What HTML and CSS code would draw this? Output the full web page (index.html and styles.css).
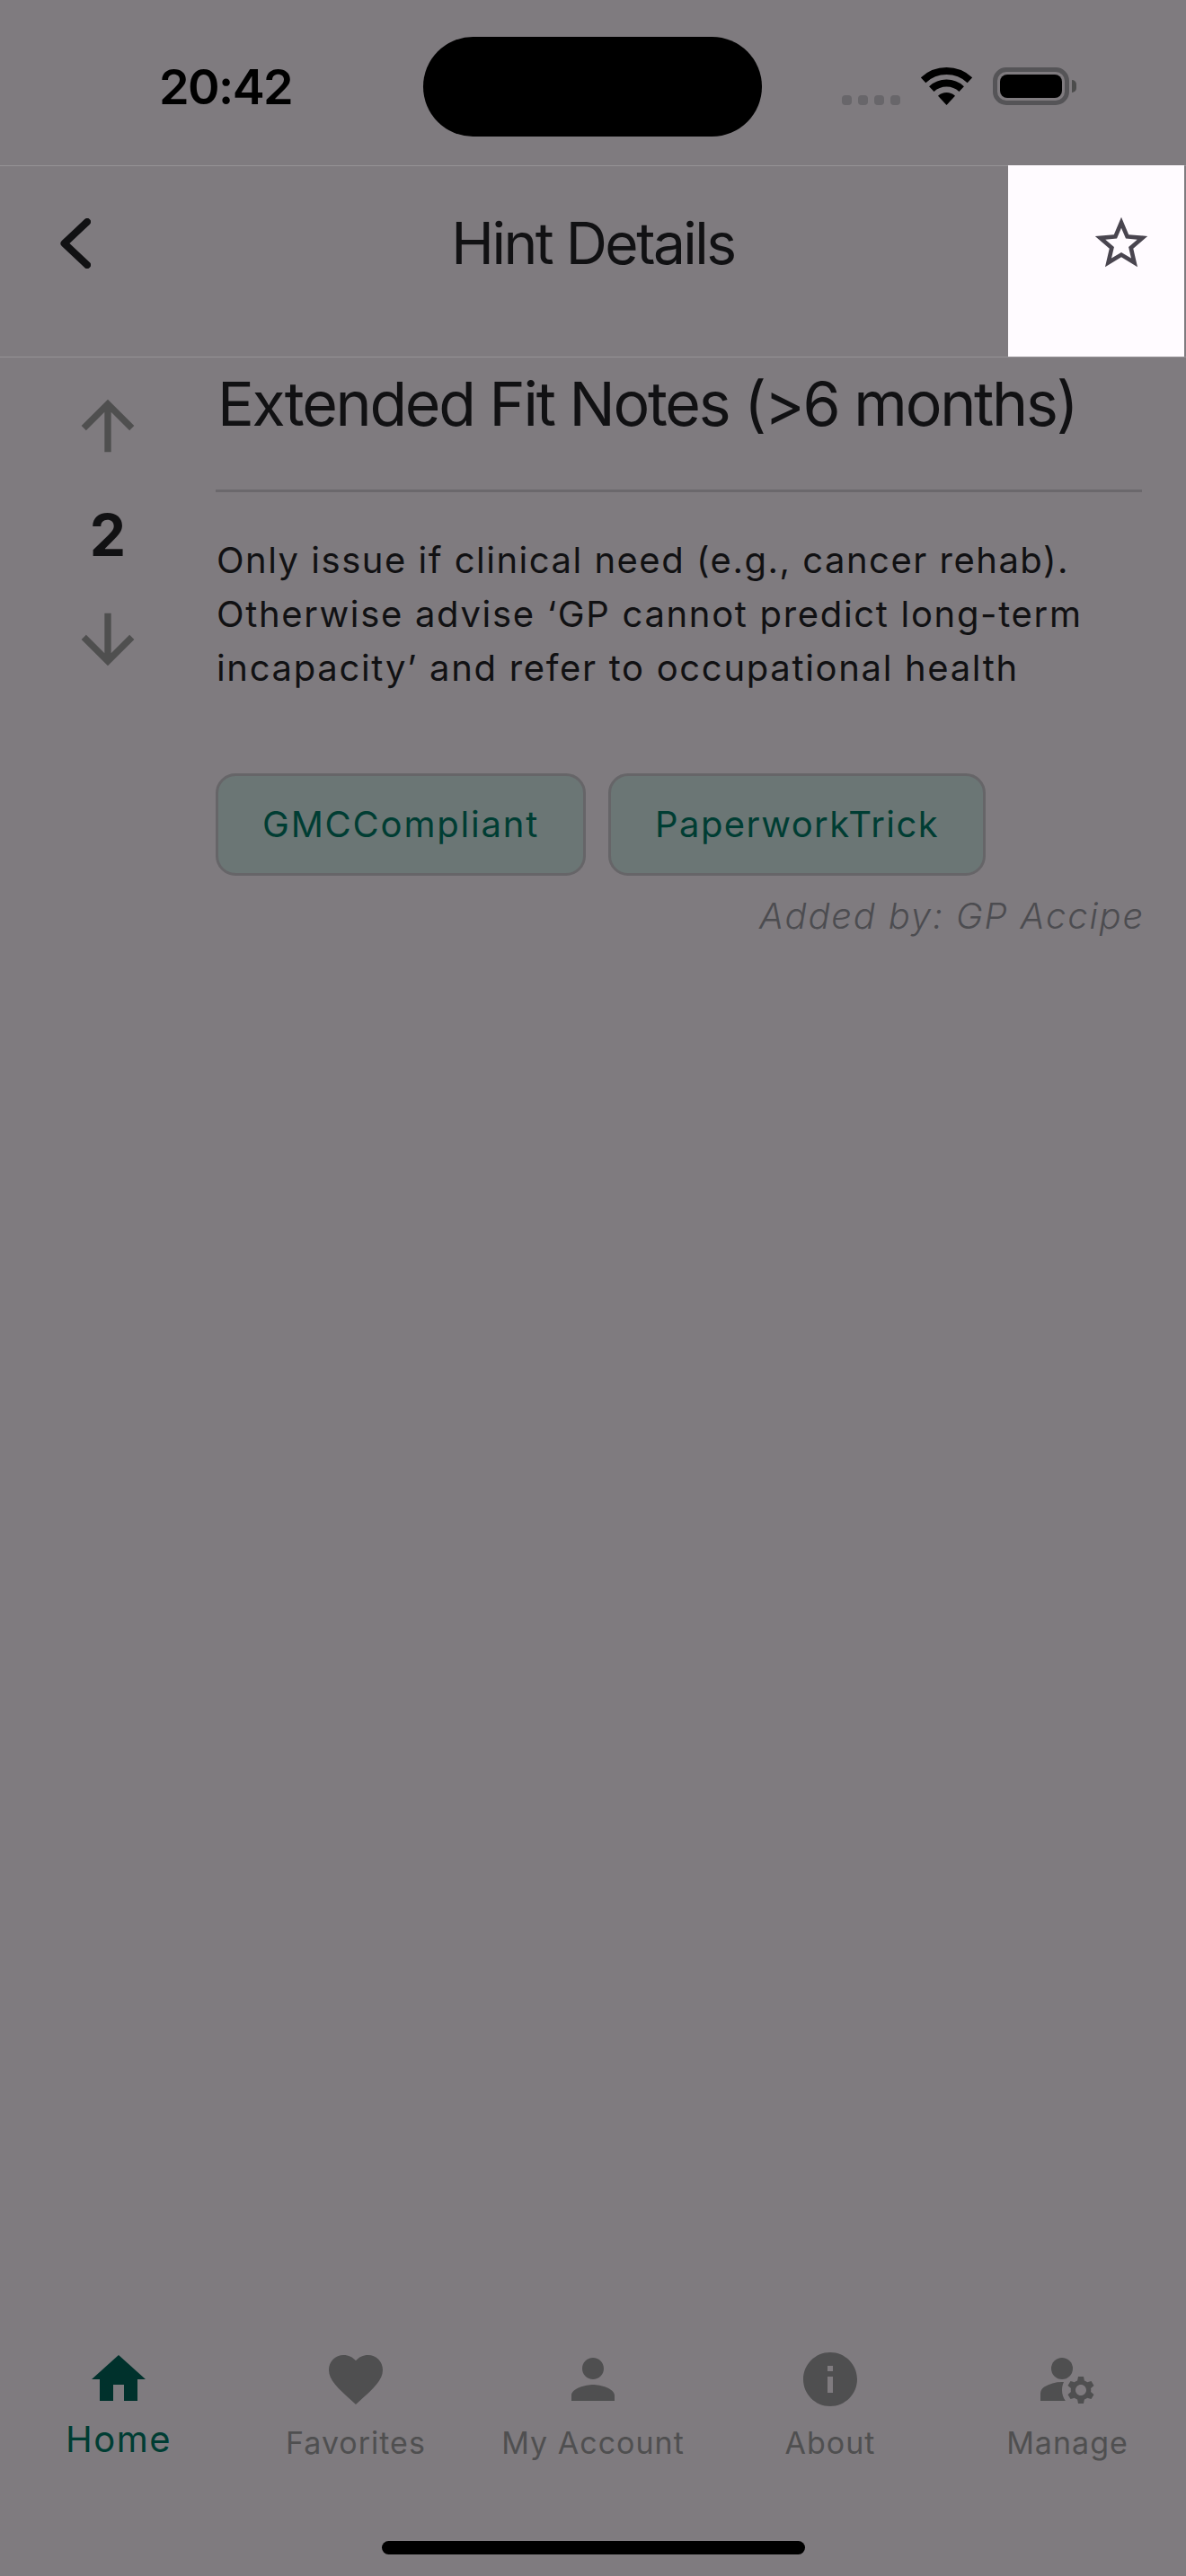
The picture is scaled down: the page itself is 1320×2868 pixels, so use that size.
FILE: index.html
```html
<!DOCTYPE html>
<html lang="en">
<head>
    <meta charset="UTF-8">
    <meta name="viewport" content="width=device-width, initial-scale=1.0">
    <title>Hint Details</title>
    <link rel="stylesheet" href="styles.css">
</head>
<body>
    <div id="screen">
        <div class="status-bar">
            <div class="status-time">20:42</div>
            <div class="island"></div>
            <div class="status-icons">
                <div class="signal"><span></span><span></span><span></span><span></span></div>
                <svg class="wifi" width="57" height="42" viewBox="0 0 57 42">
                    <path d="M2.6 14.2A38 38 0 0 1 54.4 14.2" fill="none" stroke="#000" stroke-width="8"/>
                    <path d="M11.8 24.1A24.5 24.5 0 0 1 45.2 24.1" fill="none" stroke="#000" stroke-width="8"/>
                    <path d="M28.5 42L19 31.8A14 14 0 0 1 38 31.8Z" fill="#000"/>
                </svg>
                <div class="battery"><div class="battery-fill"></div></div>
                <div class="battery-cap"></div>
            </div>
        </div>

        <div class="header">
            <div class="back">
                <svg width="34" height="56" viewBox="0 0 34 56">
                    <path d="M30 4L4.5 28L30 52" fill="none" stroke="#111113" stroke-width="8" stroke-linecap="round" stroke-linejoin="round"/>
                </svg>
            </div>
            <div class="header-title">Hint Details</div>
            <div class="fav-box">
                <svg width="70" height="70" viewBox="0 0 24 24" fill="#49454f">
                    <path d="M22 9.24l-7.19-.62L12 2 9.19 8.63 2 9.24l5.46 4.73L5.82 21 12 17.27 18.18 21l-1.63-7.03L22 9.24zM12 15.4l-3.76 2.27 1-4.28-3.32-2.88 4.38-.38L12 6.1l1.71 4.04 4.38.38-3.32 2.88 1 4.28L12 15.4z"/>
                </svg>
            </div>
        </div>

        <div class="content">
            <div class="votes">
                <svg width="88" height="88" viewBox="0 0 24 24" fill="#4f4f4f"><path d="M4 12l1.41 1.41L11 7.83V20h2V7.83l5.58 5.59L20 12l-8-8-8 8z"/></svg>
                <div class="vote-count">2</div>
                <svg width="88" height="88" viewBox="0 0 24 24" fill="#4f4f4f"><path d="M20 12l-1.41-1.41L13 16.17V4h-2v12.17l-5.58-5.59L4 12l8 8 8-8z"/></svg>
            </div>
            <div class="hint">
                <div class="hint-title">Extended Fit Notes (&gt;6 months)</div>
                <div class="hint-divider"></div>
                <div class="hint-body">
                    <div>Only issue if clinical need (e.g., cancer rehab).</div>
                    <div class="body-wide">Otherwise advise ‘GP cannot predict long-term</div>
                    <div class="body-wide">incapacity’ and refer to occupational health</div>
                </div>
                <div class="tags">
                    <div class="tag tag-wide">GMCCompliant</div>
                    <div class="tag">PaperworkTrick</div>
                </div>
                <div class="added-by">Added by: GP Accipe</div>
            </div>
        </div>

        <div class="tab-bar">
            <div class="tab active">
                <svg width="72" height="72" viewBox="0 0 24 24"><path d="M10 20v-6h4v6h5v-8h3L12 3 2 12h3v8z"/></svg>
                <div class="tab-label">Home</div>
            </div>
            <div class="tab">
                <svg width="72" height="72" viewBox="0 0 24 24"><path d="M12 21.35l-1.45-1.32C5.4 15.36 2 12.28 2 8.5 2 5.42 4.42 3 7.5 3c1.74 0 3.41.81 4.5 2.09C13.09 3.81 14.76 3 16.5 3 19.58 3 22 5.42 22 8.5c0 3.78-3.4 6.86-8.55 11.54L12 21.35z"/></svg>
                <div class="tab-label">Favorites</div>
            </div>
            <div class="tab">
                <svg width="72" height="72" viewBox="0 0 24 24"><path d="M12 12c2.21 0 4-1.79 4-4s-1.79-4-4-4-4 1.79-4 4 1.79 4 4 4zm0 2c-2.67 0-8 1.34-8 4v2h16v-2c0-2.66-5.33-4-8-4z"/></svg>
                <div class="tab-label">My Account</div>
            </div>
            <div class="tab">
                <svg width="72" height="72" viewBox="0 0 24 24"><path d="M12 2C6.48 2 2 6.48 2 12s4.48 10 10 10 10-4.48 10-10S17.52 2 12 2zm1 15h-2v-6h2v6zm0-8h-2V7h2v2z"/></svg>
                <div class="tab-label">About</div>
            </div>
            <div class="tab">
                <svg width="72" height="72" viewBox="0 0 24 24"><circle cx="10" cy="8" r="4"/><path d="M10.67 13.02C10.45 13.01 10.23 13 10 13c-2.42 0-4.68.67-6.61 1.82C2.51 15.34 2 16.32 2 17.35V20h9.26C10.47 18.87 10 17.49 10 16c0-1.07.25-2.07.67-2.98z"/><path d="M20.75 16c0-.22-.03-.42-.06-.63l1.14-1.01-1-1.73-1.45.49c-.32-.27-.68-.48-1.08-.63L18 11h-2l-.3 1.49c-.4.15-.76.36-1.08.63l-1.45-.49-1 1.73 1.14 1.01c-.03.21-.06.41-.06.63s.03.42.06.63l-1.14 1.01 1 1.73 1.45-.49c.32.27.68.48 1.08.63L16 21h2l.3-1.49c.4-.15.76-.36 1.08-.63l1.45.49 1-1.73-1.14-1.01c.03-.21.06-.41.06-.63zM17 18c-1.1 0-2-.9-2-2s.9-2 2-2 2 .9 2 2-.9 2-2 2z"/></svg>
                <div class="tab-label">Manage</div>
            </div>
        </div>

        <div class="home-row"><div class="home-bar"></div></div>
    </div>
</body>
</html>
```

FILE: styles.css
```css
body {
    margin: 0;
    font-family: Inter, "Liberation Sans", sans-serif;
    background: #7f7b7f;
    color: #111113;
}

#screen {
    width: 1320px;
    height: 2868px;
    display: flex;
    flex-direction: column;
    overflow: hidden;
}

/* status bar */
.status-bar {
    height: 184px;
    display: grid;
    grid-template-columns: 471px 377px 1fr;
    box-sizing: border-box;
    padding-top: 41px;
}

.status-time {
    padding-left: 177px;
    font-size: 54px;
    font-weight: 600;
    line-height: 111px;
    letter-spacing: -1.6px;
    color: #000;
}

.island {
    height: 111px;
    background: #000;
    border-radius: 56px;
}

.status-icons {
    display: flex;
    align-items: flex-end;
    height: 76px;
    padding-left: 89px;
}

.signal {
    display: flex;
    gap: 7px;
    margin-right: 23px;
}

.signal span {
    width: 11px;
    height: 11px;
    border-radius: 4px;
    background: #68666a;
}

.wifi {
    display: block;
    margin-right: 23px;
}

.battery {
    width: 85px;
    height: 42px;
    box-sizing: border-box;
    border: 5px solid #555457;
    border-radius: 15px;
    padding: 3px;
}

.battery-fill {
    height: 100%;
    background: #000;
    border-radius: 8px;
}

.battery-cap {
    width: 5px;
    height: 14px;
    margin: 0 0 14px 3px;
    background: #4c4c4c;
    border-radius: 0 6px 6px 0;
}

/* header */
.header {
    height: 214px;
    box-sizing: border-box;
    border-top: 1px solid #969396;
    border-bottom: 1px solid #969396;
    display: grid;
    grid-template-columns: 198px 1fr 198px;
}

.back {
    display: flex;
    align-items: center;
    padding: 0 0 41px 67px;
}

.header-title {
    text-align: center;
    font-size: 64px;
    line-height: 172px;
    letter-spacing: -2.5px;
}

.fav-box {
    display: flex;
    justify-content: center;
    align-items: center;
    padding: 0 0 40px 55px;
    background: #fffbff;
    margin: -1px 2px 0 0;
}

/* content */
.content {
    display: flex;
    flex: 1;
}

.votes {
    width: 240px;
    display: flex;
    flex-direction: column;
    align-items: center;
    padding-top: 32px;
}

.votes svg {
    display: block;
}

.vote-count {
    height: 150px;
    font-size: 64px;
    font-weight: 700;
    line-height: 156px;
}

.hint {
    width: 1031px;
    display: flex;
    flex-direction: column;
    padding-top: 11px;
}

.hint-title {
    font-size: 68px;
    line-height: 80px;
    letter-spacing: -2.25px;
    padding-left: 2px;
}

.hint-divider {
    height: 3px;
    margin-top: 56px;
    background: #6b686c;
}

.hint-body {
    margin-top: 46px;
    padding-left: 1px;
    font-size: 40px;
    line-height: 60px;
    letter-spacing: 1.5px;
}

.body-wide {
    letter-spacing: 1.68px;
}

.tags {
    display: flex;
    gap: 25px;
    margin-top: 87px;
}

.tag {
    height: 114px;
    box-sizing: border-box;
    border: 3px solid #666568;
    border-radius: 22px;
    padding: 0 49px;
    background: #6b7675;
    color: #003d33;
    font-size: 40px;
    line-height: 108px;
    letter-spacing: 1.4px;
}

.tag-wide {
    letter-spacing: 1.8px;
}

.added-by {
    margin: 20px -3px 0 0;
    text-align: right;
    font-size: 40px;
    font-style: italic;
    font-weight: 300;
    line-height: 50px;
    color: #4c4c50;
    letter-spacing: 1.8px;
}

/* bottom tabs */
.tab-bar {
    display: flex;
    padding-top: 24px;
}

.tab {
    width: 264px;
    display: flex;
    flex-direction: column;
    align-items: center;
    fill: #4f4f50;
    color: #4f4f50;
}

.tab svg {
    display: block;
}

.tab-label {
    margin-top: 7px;
    font-size: 34px;
    line-height: 56px;
    letter-spacing: 1px;
}

.tab.active {
    fill: #00312c;
    color: #003d33;
}

.tab.active .tab-label {
    margin-top: 6px;
    font-size: 40px;
    line-height: 50px;
    letter-spacing: 1.5px;
}

.home-row {
    display: flex;
    justify-content: center;
    padding: 81px 0 24px;
}

.home-bar {
    width: 471px;
    height: 15px;
    border-radius: 8px;
    background: #000;
}
```
